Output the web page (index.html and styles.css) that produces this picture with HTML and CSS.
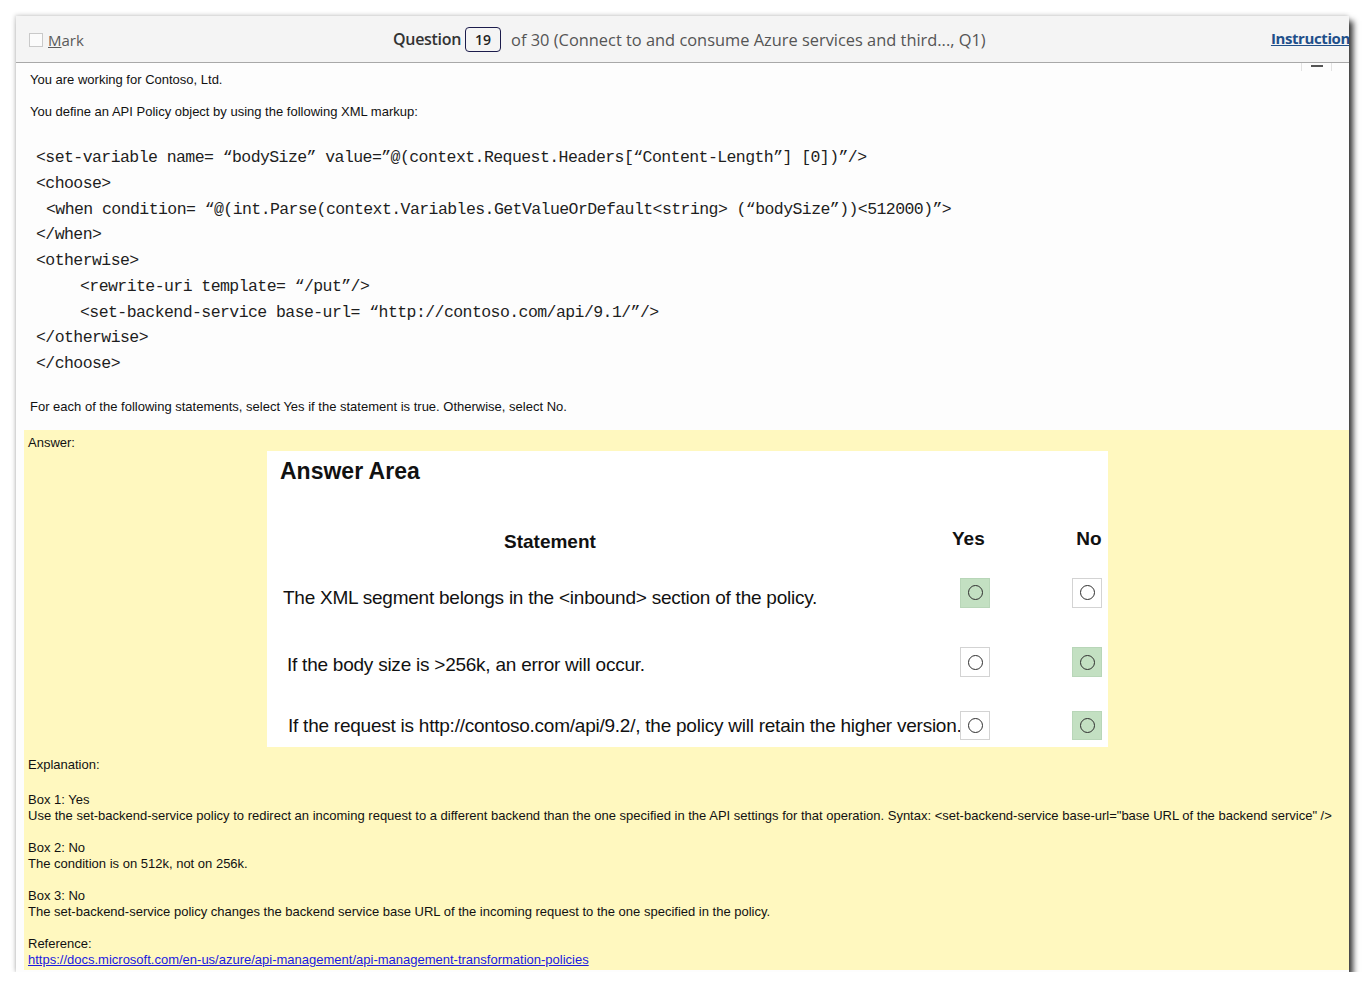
FILE: index.html
```html
<!DOCTYPE html>
<html lang="en">
<head>
<meta charset="utf-8">
<title>Question 19</title>
<link rel="stylesheet" href="styles.css">
</head>
<body>
<div class="window">
  <div class="header">
    <div class="mark"><span class="checkbox"></span><span class="mark-label"><u>M</u>ark</span></div>
    <div class="question">
      <span class="q-label">Question</span>
      <span class="q-num">19</span>
      <span class="q-of">of 30 (Connect to and consume Azure services and third..., Q1)</span>
    </div>
    <a class="instructions" href="#">Instructions</a>
  </div>
  <div class="scroll-tab"><span></span></div>
  <div class="content">
    <p class="txt first">You are working for Contoso, Ltd.</p>
    <p class="txt">You define an API Policy object by using the following XML markup:</p>
    <div class="code">
      <div class="cl">&lt;set-variable name= “bodySize” value=”@(context.Request.Headers[“Content-Length”] [0])”/&gt;</div>
      <div class="cl">&lt;choose&gt;</div>
      <div class="cl i1">&lt;when condition= “@(int.Parse(context.Variables.GetValueOrDefault&lt;string&gt; (“bodySize”))&lt;512000)”&gt;</div>
      <div class="cl">&lt;/when&gt;</div>
      <div class="cl">&lt;otherwise&gt;</div>
      <div class="cl i2">&lt;rewrite-uri template= “/put”/&gt;</div>
      <div class="cl i2">&lt;set-backend-service base-url= “http://contoso.com/api/9.1/”/&gt;</div>
      <div class="cl">&lt;/otherwise&gt;</div>
      <div class="cl">&lt;/choose&gt;</div>
    </div>
    <p class="txt">For each of the following statements, select Yes if the statement is true. Otherwise, select No.</p>
  </div>
  <div class="answer">
    <p class="txt">Answer:</p>
    <div class="area">
      <div class="area-title">Answer Area</div>
      <div class="arow head">
        <div class="stmt-head">Statement</div>
        <div class="yn yes-h">Yes</div>
        <div class="yn no-h">No</div>
      </div>
      <div class="arow r1">
        <div class="stmt">The XML segment belongs in the &lt;inbound&gt; section of the policy.</div>
        <div class="radio sel"><span></span></div>
        <div class="radio"><span></span></div>
      </div>
      <div class="arow r2">
        <div class="stmt">If the body size is &gt;256k, an error will occur.</div>
        <div class="radio"><span></span></div>
        <div class="radio sel"><span></span></div>
      </div>
      <div class="arow r3">
        <div class="stmt">If the request is http://contoso.com/api/9.2/, the policy will retain the higher version.</div>
        <div class="radio"><span></span></div>
        <div class="radio sel"><span></span></div>
      </div>
    </div>
    <div class="explain">
      <p class="txt">Explanation:</p>
      <p class="txt gap">Box 1: Yes<br>Use the set-backend-service policy to redirect an incoming request to a different backend than the one specified in the API settings for that operation. Syntax: &lt;set-backend-service base-url="base URL of the backend service" /&gt;</p>
      <p class="txt gap">Box 2: No<br>The condition is on 512k, not on 256k.</p>
      <p class="txt gap">Box 3: No<br>The set-backend-service policy changes the backend service base URL of the incoming request to the one specified in the policy.</p>
      <p class="txt gap">Reference:<br><a class="ref" href="#">https://docs.microsoft.com/en-us/azure/api-management/api-management-transformation-policies</a></p>
    </div>
  </div>
</div>
</body>
</html>
```
FILE: styles.css
```css
html, body {
  margin: 0;
  padding: 0;
  background: #ffffff;
}

.window {
  position: relative;
  margin: 16px 0 0 16px;
  width: 1333px;
  height: 956px;
  background: #fdfdfd;
  overflow: hidden;
  box-shadow: 4px 5px 6px rgba(0, 0, 0, 0.8), -1px -1px 4px rgba(0, 0, 0, 0.18);
  display: flex;
  flex-direction: column;
}

.header {
  height: 46px;
  flex: none;
  background: #f4f4f4;
  border-bottom: 1px solid #a8a8a8;
  display: flex;
  align-items: center;
  padding-left: 13px;
  font-family: "Open Sans", "Noto Sans", sans-serif;
  font-size: 16px;
}

.mark {
  width: 364px;
  display: flex;
  align-items: center;
  padding-top: 2px;
}

.checkbox {
  width: 12px;
  height: 12px;
  border: 1px solid #c9c9c9;
  background: #fbfbfb;
  margin-right: 5px;
}

.mark-label {
  color: #5a5a5a;
  font-size: 15px;
}

.mark-label u {
  text-decoration-thickness: 1px;
}

.question {
  display: flex;
  align-items: center;
}

.q-label {
  font-weight: 600;
  color: #333;
  letter-spacing: -0.3px;
}

.q-num {
  margin: 0 10px 0 4px;
  width: 34px;
  height: 23px;
  border: 1px solid #1c1c4c;
  border-radius: 4px;
  display: flex;
  align-items: center;
  justify-content: center;
  font-size: 14px;
  font-weight: 600;
  color: #222;
}

.q-of {
  color: #555;
  font-size: 16.4px;
}

.instructions {
  margin-left: auto;
  margin-right: -8px;
  font-size: 15px;
  letter-spacing: -0.4px;
  font-weight: 700;
  color: #1f4f8a;
  text-decoration: underline;
  padding-bottom: 3px;
}

.scroll-tab {
  position: absolute;
  top: 47px;
  left: 1285px;
  width: 29px;
  height: 8px;
  border-left: 1px solid #e2e2e2;
  border-right: 1px solid #e2e2e2;
  display: flex;
  justify-content: center;
}

.scroll-tab span {
  margin-top: 2px;
  width: 12px;
  height: 2px;
  background: #555;
}

.content {
  height: 367px;
  flex: none;
  box-sizing: border-box;
  padding: 9px 0 0 14px;
  background: #fdfdfd;
}

.txt {
  margin: 0 0 16px 0;
  font-family: "Liberation Sans", Arial, sans-serif;
  font-size: 13px;
  line-height: 16px;
  color: #111;
}

.code {
  margin: 25px 0 22px 6px;
  font-family: "Liberation Mono", "Courier New", monospace;
  font-size: 16.5px;
  letter-spacing: -0.57px;
  line-height: 25.75px;
  color: #1e1e1e;
}

.code .cl {
  white-space: pre;
  height: 25.75px;
}

.code .i1 {
  padding-left: 10px;
}

.code .i2 {
  padding-left: 44px;
}

.answer {
  margin-left: 8px;
  height: 540px;
  flex: none;
  box-sizing: border-box;
  background: #fff8bf;
  padding: 5px 0 0 4px;
}

.answer > .txt {
  margin: 0;
}

.area {
  margin: 0 0 0 239px;
  width: 841px;
  height: 296px;
  box-sizing: border-box;
  background: #ffffff;
  padding: 0 6px 0 16px;
  font-family: "Liberation Sans", Arial, sans-serif;
  color: #111;
}

.area-title {
  margin-left: -3px;
  height: 40px;
  line-height: 40px;
  font-size: 23px;
  font-weight: 700;
}

.arow {
  display: grid;
  grid-template-columns: 677px 112px 30px;
  align-items: center;
}

.arow.head {
  margin-top: 32px;
  height: 32px;
}

.stmt-head {
  padding-left: 221px;
  padding-top: 5px;
  font-size: 19px;
  font-weight: 700;
}

.yn {
  font-size: 19px;
  font-weight: 700;
}

.yes-h {
  justify-self: start;
  margin-left: -8px;
}

.no-h {
  justify-self: center;
  margin-left: 4px;
}

.stmt {
  font-size: 19px;
  letter-spacing: -0.24px;
  white-space: nowrap;
}

.arow.r1 {
  margin-top: 21px;
  height: 30px;
}

.arow.r1 .stmt {
  padding-top: 11px;
}

.arow.r2 {
  margin-top: 41px;
  height: 30px;
}

.arow.r2 .stmt {
  padding-top: 5px;
  padding-left: 4px;
}

.arow.r3 {
  margin-top: 34px;
  height: 29px;
}

.arow.r3 .stmt {
  padding-left: 5px;
}

.radio {
  width: 30px;
  height: 30px;
  box-sizing: border-box;
  border: 1px solid #d3d3d3;
  background: #ffffff;
  display: flex;
  align-items: center;
  justify-content: center;
}

.arow.r3 .radio {
  height: 29px;
}

.radio.sel {
  background: #c3e0c2;
  border-color: #b8d6b8;
}

.radio span {
  width: 13px;
  height: 13px;
  border: 1.7px solid #2e2e2e;
  border-radius: 50%;
}

.explain {
  padding-top: 10px;
}

.explain .txt {
  margin: 0;
}

.explain .txt.gap {
  margin-top: 19px;
}

.explain .txt.gap ~ .txt.gap {
  margin-top: 16px;
}

.ref {
  color: #1a1ae0;
  text-decoration: underline;
}
```
